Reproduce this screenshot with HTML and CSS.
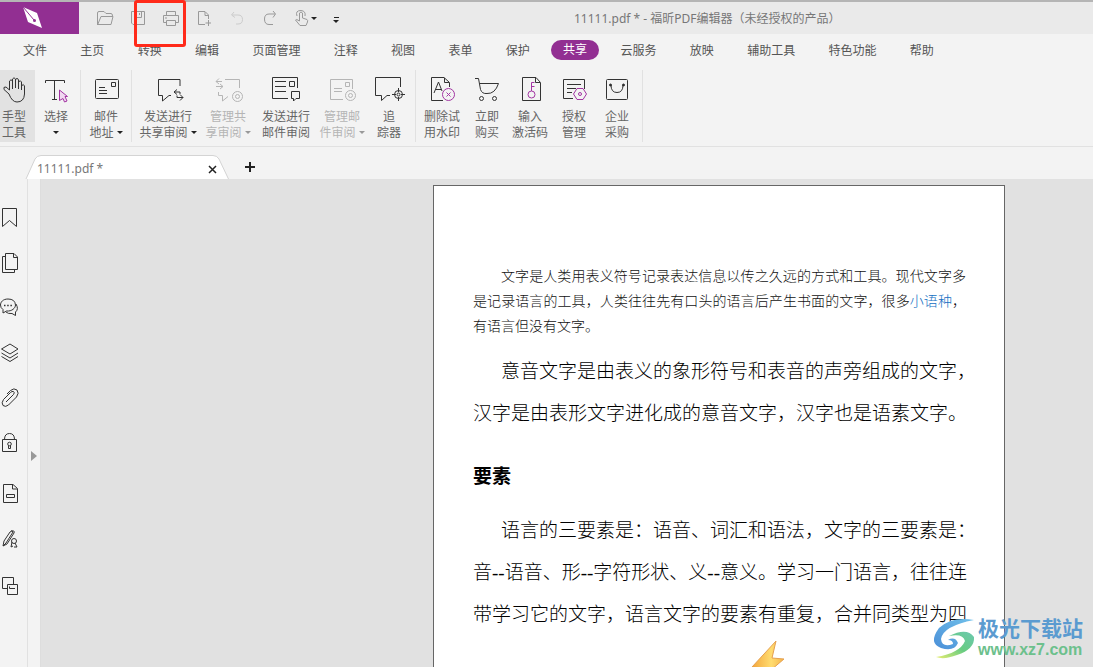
FILE: index.html
```
<!DOCTYPE html>
<html lang="zh-CN">
<head>
<meta charset="utf-8">
<title>11111.pdf * - 福昕PDF编辑器</title>
<link rel="stylesheet" href="styles.css">
</head>
<body>
<div class="app">
  <header class="titlebar">
    <div class="logo"><svg width="22" height="24" viewBox="22 6 22 24"><path d="M23 7L37 13L42 28L28 22Z" fill="#fff"/><path d="M23 7L34 20" stroke="#922f92" stroke-width="1"/><circle cx="34.500" cy="20.500" r="1.500" fill="#922f92"/></svg></div>
    <div class="quick">
      <button aria-label="打开"><svg viewBox="93 6 24 24"><path d="M97.500 25V13Q97.500 11.500 99 11.500H104L106 13.500H111Q112.500 13.500 112.500 16M97.500 25L101 16.500H113L111 24.500H97.500"/></svg></button>
      <button aria-label="保存"><svg viewBox="126 6 24 24"><path d="M131.500 11.500H144.500V24.500H133L131.500 23ZM134.500 12V17.500H141.500V12M139.500 13V15"/></svg></button>
      <button aria-label="打印"><svg viewBox="159 6 24 24"><path d="M166.500 15V11.500H175.500V15M166 22.500H163.500V15.500H178.500V22.500H176M166.500 20.500H175.500V25.500H166.500ZM165 18H167"/></svg></button>
      <button aria-label="新建"><svg viewBox="192 6 24 24"><path d="M205 24.500H198.500V11.500H205L208.500 15V19M205 12V15.500H208M208.500 20V26M205.500 23H211"/></svg></button>
      <button aria-label="撤销" class="off"><svg viewBox="225 6 24 24"><path d="M234 12L231.500 15L235 17.500M232 15H238Q242.500 15 242.500 19.500Q242.500 24 238 24H236"/></svg></button>
      <button aria-label="重做"><svg viewBox="258 6 24 24"><path d="M273 11L275.500 14L273 17.500M275 14H269Q264.500 14 264.500 19Q264.500 24.500 269 24.500H273"/></svg></button>
      <button aria-label="手势" class="wide"><svg viewBox="288 6 24 24"><path d="M297.500 21V13Q299 11 300.500 13V18L305 19.500Q306 20 305.500 22L304 25.500H298L293.500 20Q294 18.500 297.500 21M295 16Q293 10.500 299 10.500Q304 11 303 16"/></svg><i class="caret"></i></button>
      <button aria-label="自定义" class="more"><i class="bar"></i><i class="caret"></i></button>
    </div>
    <h1 class="title">11111.pdf * - 福昕PDF编辑器（未经授权的产品）</h1>
  </header>
  <div class="marker"></div>
  <nav class="menu">
    <a href="#">文件</a><a href="#">主页</a><a href="#">转换</a><a href="#">编辑</a><a href="#">页面管理</a><a href="#">注释</a><a href="#">视图</a><a href="#">表单</a><a href="#">保护</a><a href="#" class="active">共享</a><a href="#">云服务</a><a href="#">放映</a><a href="#">辅助工具</a><a href="#">特色功能</a><a href="#">帮助</a>
  </nav>
  <div class="ribbon">
    <div class="group first">
      <button class="tool hand"><svg viewBox="2 76 32 28"><path d="M9 94L4 89.500Q3 86.500 6 87L9.500 90V81Q11 78.500 12.500 81V89M12.500 88V79Q14 76.500 15.500 79V88M15.500 80Q17 76.500 18.500 80V89M18.500 82Q20.500 79.500 21.500 82V90M21.500 86Q23.500 83 24.500 86V94Q24 102 17 102Q12 102 9 94"/></svg><span>手型<br>工具</span></button>
      <button class="tool select"><svg viewBox="40 76 32 28"><path d="M45.500 83V80.500H64.500V83M54.500 80.500V99.500M52 99.500H57"/><path class="accent tint" d="M59.500 90L67.500 96.500H65L67 101L64.500 102L63 98.500L59.500 100.500Z"/></svg><span>选择<br><i class="caret"></i></span></button>
    </div>
    <div class="group">
      <button class="tool mail"><svg viewBox="90 76 32 28"><rect x="95.500" y="79.500" width="23" height="19" rx="1"/><path d="M111.500 82.500H115.500V86.500H111.500ZM99 87.500H105M99 90.500H107M99 93.500H107"/></svg><span>邮件<br>地址<i class="caret"></i></span></button>
    </div>
    <div class="group review">
      <button class="tool w60"><svg viewBox="153 76 32 28"><path d="M181 86V79.500H159.500V95.500H163.500V101L170 95.500H172M178 89.500L175 92L178 94.500M175 92H181V94M181 94.500L184 97.500L181 100.500M184 97.500H178V95.500"/></svg><span>发送进行<br>共享审阅<i class="caret"></i></span></button>
      <button class="tool w60" disabled><svg viewBox="213 76 32 28"><path d="M226 79.500H240.500V88M219.500 92V95.500H223.500V101L229 96.500M220 78.500L217 81.500L220 84M217 81.500H223M221 84L224 86.500L221 89M224 86.500H217"/><circle cx="238.500" cy="96.500" r="5"/><circle cx="238.500" cy="96.500" r="2"/></svg><span>管理共<br>享审阅<i class="caret"></i></span></button>
      <button class="tool w56"><svg viewBox="270 76 32 28"><path d="M288 98.500H272.500V77.500H297.500V88M275 81.500H286M275 86.500H286M275 91.500H286M289.500 81.500H294.500V86.500H289.500ZM291.500 91.500H299.500V98.500H296L293.500 101V98.500H291.500Z"/></svg><span>发送进行<br>邮件审阅</span></button>
      <button class="tool w56" disabled><svg viewBox="326 76 32 28"><path d="M343 99.500H330.500V79.500H352.500V89M345.500 82.500H349.500V86.500H345.500ZM334 88.500H342M334 91.500H342"/><circle cx="350.500" cy="95.500" r="5"/><circle cx="350.500" cy="95.500" r="2"/></svg><span>管理邮<br>件审阅<i class="caret"></i></span></button>
      <button class="tool tracker"><svg viewBox="373 76 32 28"><path d="M400.500 87V77.500H375.500V95.500H381.500V100.500L387 95.500H390M398.500 88V92M398.500 97V101M392 94.500H396M401 94.500H405"/><circle cx="398.500" cy="94.500" r="4"/><circle cx="398.500" cy="94.500" r="1.500"/></svg><span>追<br>踪器</span></button>
    </div>
    <div class="group last">
      <button class="tool mark"><svg viewBox="426 76 32 28"><path d="M443 100.500H431.500V77.500H444L449.500 82.500V87M444.500 78V82.500H449M434 93L438.500 82L442 91M435.500 89.500H441"/><circle class="accent" cx="448.500" cy="94.500" r="6"/><path class="accent" d="M446.500 92.500L450.500 96.500M450.500 92.500L446.500 96.500"/></svg><span>删除试<br>用水印</span></button>
      <button class="tool buy"><svg viewBox="471 76 32 28"><path d="M475 78.500H478.500L480.500 89.500Q482 94 487 93.500Q495 94 498.500 83.500H479.500"/><circle cx="481.500" cy="98.500" r="2"/><circle cx="494.500" cy="98.500" r="2"/></svg><span>立即<br>购买</span></button>
      <button class="tool code"><svg viewBox="514 76 32 28"><path d="M522.500 77.500H536L540.500 82.500V100.500H522.500ZM535.500 78V82.500H540"/><circle class="accent" cx="531.500" cy="94.500" r="3.500"/><path class="accent" d="M531.500 91V82.500M531.500 82.500H534.500M531.500 86.500H534.500"/></svg><span>输入<br>激活码</span></button>
      <button class="tool auth"><svg viewBox="558 76 32 28"><path d="M573 98.500H563.500V79.500H584.500V89M567 84.500H581M567 88.500H576M567 92.500H572"/><path class="accent" d="M577 88.500H583L586.500 94L583 99.500H577L573.500 94Z"/><circle class="accent" cx="580" cy="94" r="1.500"/></svg><span>授权<br>管理</span></button>
      <button class="tool corp"><svg viewBox="601 76 32 28"><rect x="606.500" y="79.500" width="21" height="20" rx="1"/><path d="M611 85Q611 92.500 617 92.500Q623 92.500 623 85"/><circle cx="610.500" cy="85" r="1" fill="#222"/><circle cx="623.500" cy="85" r="1" fill="#222"/></svg><span>企业<br>采购</span></button>
    </div>
  </div>
  <div class="tabs">
    <div class="tab">
      <svg class="shape" viewBox="0 0 203 24"><path d="M0 24L9 4Q11 .5 15 .5H187Q191 .5 193 4L202.500 24" fill="#fff" stroke="#d4d4d4"/></svg>
      <span class="name">11111.pdf *</span>
      <button class="close" aria-label="关闭"><svg width="9" height="9" viewBox="0 0 9 9"><path d="M1 1L8 8M8 1L1 8"/></svg></button>
    </div>
    <button class="add" aria-label="新标签"><svg width="10" height="10" viewBox="0 0 10 10"><path d="M5 0V10M0 5H10"/></svg></button>
  </div>
  <div class="body">
    <aside class="side">
      <div class="pins">
        <button aria-label="书签"><svg viewBox="0 0 20 24"><path d="M2.500 2.500H16.500V20.500L9.500 14.500L2.500 20.500Z"/></svg></button>
        <button aria-label="页面"><svg viewBox="0 0 20 24"><path d="M5.500 2.500H14L17.500 6V18.500H5.500ZM13.500 3V6.500H17M5 5.500H2.500V21.500H14.500V19"/></svg></button>
        <button aria-label="注释"><svg viewBox="0 0 20 24"><path d="M8 3C3 3 0.500 6 0.500 9Q.5 12 3 13.500V17L6.500 15C12 15.500 15.500 12 15.500 9Q15 3 8 3M16 8Q19 13 15.500 16V19.500L12 17.500Q8 18 6 16"/><path d="M4 9.500H12" stroke-width="1.500" stroke-dasharray="1.500 1.700"/></svg></button>
        <button aria-label="图层"><svg viewBox="0 0 20 24"><path d="M10 3L18 8L10 13L1.500 8ZM1.500 12L10 17L18 12M1.500 15.500L10 20.500L18 15.500"/></svg></button>
        <button aria-label="附件"><svg viewBox="0 0 20 24"><path d="M6 16L13.500 8.500Q15 6.500 13.500 5.500Q12 5 10.500 6.500L3.500 13.500Q1 17 3 19.500Q5.500 21.500 8.500 19L16.500 11Q19.500 7 17 4Q14 1.500 10.500 4.500L7 8"/></svg></button>
        <button aria-label="安全"><svg viewBox="0 0 20 24"><path d="M2.500 8.500H16.500V20.500H2.500ZM4.500 8.500Q4.500 2.500 9.500 2.500Q14.500 2.500 14.500 8.500M8.500 14.500V17.500H10.500V14.500"/><circle cx="9.500" cy="13" r="1.800"/></svg></button>
      </div>
      <div class="pins lower">
        <button aria-label="表单域"><svg viewBox="0 0 20 24"><path d="M3.500 2.500H13L17.500 6.500V20.500H3.500ZM12.500 3V7H17M6.500 12.500H14.500V15.500H6.500Z"/></svg></button>
        <button aria-label="签名"><svg viewBox="0 0 20 24"><path d="M3 18L4 13L10 4Q12 2 13 4L6 15ZM11 3Q15 2 14 5L7 16L3 18M12 14L11 19L13 18M15 15L17 19H14"/><circle cx="14" cy="13" r="2.500"/></svg></button>
        <button aria-label="对比"><svg viewBox="0 0 20 24"><path d="M7 14.500H2.500V3.500H13.500V10M7.500 10.500H17.500V20.500H7.500ZM9.500 12.500V14.500H15"/></svg></button>
      </div>
    </aside>
    <button class="strip" aria-label="展开"><svg width="6" height="10" viewBox="0 0 6 10"><path d="M0 0L6 5L0 10Z"/></svg></button>
    <main class="canvas">
      <article class="page">
        <p class="small">文字是人类用表义符号记录表达信息以传之久远的方式和工具。现代文字多是记录语言的工具，人类往往先有口头的语言后产生书面的文字，很多<a href="#">小语种</a>，有语言但没有文字。</p>
        <p class="large">意音文字是由表义的象形符号和表音的声旁组成的文字，<br>汉字是由表形文字进化成的意音文字，汉字也是语素文字。</p>
        <h2>要素</h2>
        <p class="large">语言的三要素是：语音、词汇和语法，文字的三要素是：<br>音--语音、形--字符形状、义--意义。学习一门语言，往往连<br>带学习它的文字，语言文字的要素有重复，合并同类型为四</p>
        <svg class="bolt" width="36" height="42" viewBox="0 0 36 42"><defs><linearGradient id="gold" x1="0" y1="0" x2="1" y2="0"><stop offset="0" stop-color="#f3a63c"/><stop offset=".6" stop-color="#ffdc70"/><stop offset="1" stop-color="#f5b54a"/></linearGradient></defs><path d="M26 1L2 27L15 28L8 41L34 19L22 18Z" fill="url(#gold)" stroke="#e5a050"/></svg>
      </article>
    </main>
  </div>
  <div class="brand">
    <svg width="46" height="42" viewBox="932 616 46 42"><defs><linearGradient id="blue" x1="0" y1="1" x2="1" y2="0"><stop offset="0" stop-color="#4b8fd8"/><stop offset="1" stop-color="#70c0ea"/></linearGradient><linearGradient id="green" x1="0" y1="1" x2="1" y2="0"><stop offset="0" stop-color="#e8ee70"/><stop offset=".5" stop-color="#68cc82"/><stop offset="1" stop-color="#6cc8b0"/></linearGradient></defs><path d="M974 619Q952 615 939 627Q928 642 941 647Q954 651 958 642Q955 635 948 639Q953 639 953 643Q942 647 941 638Q943 625 974 619Z" fill="url(#blue)"/><path d="M949 635Q967 626 974 636Q975 648 957 654Q944 659 936 656Q960 652 965 640Q963 632 949 635Z" fill="url(#green)"/></svg>
    <div><strong>极光下载站</strong><span>www.xz7.com</span></div>
  </div>
</div>
</body>
</html>
```
FILE: styles.css
```
* { box-sizing: border-box; }
body {
  margin: 0;
  font: 12px/16px "Noto Sans", "Noto Sans CJK SC", sans-serif;
  color: #666;
  background: #f3f3f3;
}
button {
  margin: 0;
  padding: 0;
  border: 0;
  background: none;
  font: inherit;
  color: inherit;
}
a { color: inherit; text-decoration: none; }
svg { fill: none; stroke: #333; stroke-width: 1; flex: none; overflow: visible; }
.app { position: relative; display: flex; flex-direction: column; height: 100vh; overflow: hidden; }

.titlebar {
  display: flex;
  flex: none;
  height: 34px;
  border-top: 2px solid #b5b5b5;
  background: #eaeaea;
}
.logo { display: flex; justify-content: center; width: 79px; padding: 4px 14px 0 0; background: #922f92; }
.logo svg { stroke: none; }
.quick { display: flex; align-items: center; padding-left: 9px; }
.quick button { display: flex; align-items: center; justify-content: center; width: 33px; height: 32px; }
.quick svg { width: 24px; height: 24px; stroke: #999; }
.quick .off svg { stroke: #ccc; }
.quick .wide { width: 38px; }
.quick .wide svg { margin: 0 -3px; }
.quick .more { flex-direction: column; gap: 2px; width: 24px; padding-top: 3px; }
.bar { width: 5px; height: 1px; background: #222; }
.caret {
  display: inline-block;
  border: 3px solid transparent;
  border-top-color: currentColor;
  border-bottom: 0;
}
.quick .caret { color: #222; }
.title { margin: 0 0 0 226px; padding-top: 1px; font-size: 12px; font-weight: 400; line-height: 32px; white-space: nowrap; color: #777; }
.marker {
  position: absolute;
  left: 134px;
  top: 0;
  width: 52px;
  height: 47px;
  border: 3px solid #ff2a1a;
  border-radius: 3px;
}

.menu {
  display: flex;
  flex: none;
  align-items: center;
  justify-content: space-between;
  max-width: 934px;
  height: 32px;
  padding-left: 23px;
  color: #555;
}
.menu a { padding-top: 2px; }
.menu .active { margin: 0 -12px; padding: 2px 12px; border-radius: 10px; color: #fff; background: #922f92; }

.ribbon { display: flex; flex: none; height: 81px; padding: 4px 0 4px; border-bottom: 1px solid #e1e1e1; }
.group { display: flex; border-right: 1px solid #e1e1e1; }
.first { padding-right: 3px; }
.review { padding: 0 7px 0 6px; }
.last { padding-right: 2px; }
.tool { display: flex; flex-direction: column; align-items: center; gap: 5px; padding-top: 6px; white-space: nowrap; }
.tool svg { width: 32px; height: 28px; }
.tool .accent { stroke: #a335a3; }
.tool .tint { fill: #f0d8f0; }
.tool span .caret { margin-left: 3px; vertical-align: 3px; color: #222; }
.select span .caret { margin-left: 0; }
.tool:disabled { color: #b5b5b5; }
.tool:disabled svg { stroke: #b5b5b5; }
.tool:disabled .caret { color: #999; }
.hand { align-items: flex-start; width: 35px; padding-left: 2px; background: #e2e2e2; }
.select { width: 42px; }
.mail { width: 50px; }
.w60 { width: 60px; }
.w56 { width: 56px; }
.tracker, .buy { width: 38px; }
.mark { width: 52px; }
.code { width: 48px; }
.auth { width: 40px; }
.corp { width: 46px; }

.tabs { display: flex; flex: none; align-items: flex-end; height: 32px; padding-left: 26px; }
.tab { position: relative; display: flex; align-items: center; justify-content: space-between; width: 203px; height: 24px; padding: 4px 12px 0 11px; }
.shape { position: absolute; inset: 0; }
.name { position: relative; color: #777; }
.close { position: relative; display: flex; }
.close svg { stroke: #222; stroke-width: 1.5; }
.add { display: flex; margin: 0 0 7px 16px; }
.add svg { stroke: #222; stroke-width: 2; }

.body { display: flex; flex: 1; min-height: 0; }
.side { width: 28px; padding-top: 16px; border-right: 1px solid #e1e1e1; }
.pins button { display: flex; align-items: center; width: 27px; height: 45px; }
.pins svg { width: 20px; height: 24px; }
.lower { padding-top: 6px; }
.lower button { height: 46px; }
.strip { display: flex; align-items: flex-start; justify-content: center; width: 13px; padding-top: 272px; border-right: 1px solid #ddd; }
.strip svg { fill: #999; stroke: none; }
.canvas { flex: 1; padding-top: 6px; overflow: hidden; background: #e1e1e1; }
.page {
  width: 572px;
  min-height: 640px;
  margin-left: 392px;
  padding: 78px 38px 0 39px;
  border: 1px solid #666;
  background: #fff;
  color: #000;
  font-family: "Liberation Serif", "Noto Sans CJK SC", serif;
  font-weight: 300;
}
.page p { margin: 0; text-indent: 28px; }
.page .small { font-size: 14px; line-height: 25px; text-align: justify; color: #111; }
.page .small a { color: #136ec2; }
.page .large { font-size: 19px; line-height: 42px; white-space: nowrap; }
.page .small + .large { padding-top: 12px; }
.page h2 { margin: 20px 0 12px; font-size: 19px; font-weight: 700; line-height: 43px; }
.bolt { display: block; margin: 4px 0 0 277px; }

.brand { position: absolute; right: 10px; bottom: 8px; display: flex; align-items: center; }
.brand svg { stroke: none; }
.brand div { display: flex; flex-direction: column; font-family: "Liberation Sans", "Noto Sans CJK SC", sans-serif; }
.brand strong { font-size: 21px; line-height: 24px; font-weight: 700; color: #5b9bd0; }
.brand span { font-size: 16px; line-height: 18px; font-weight: 700; color: #6cc08c; }
```
